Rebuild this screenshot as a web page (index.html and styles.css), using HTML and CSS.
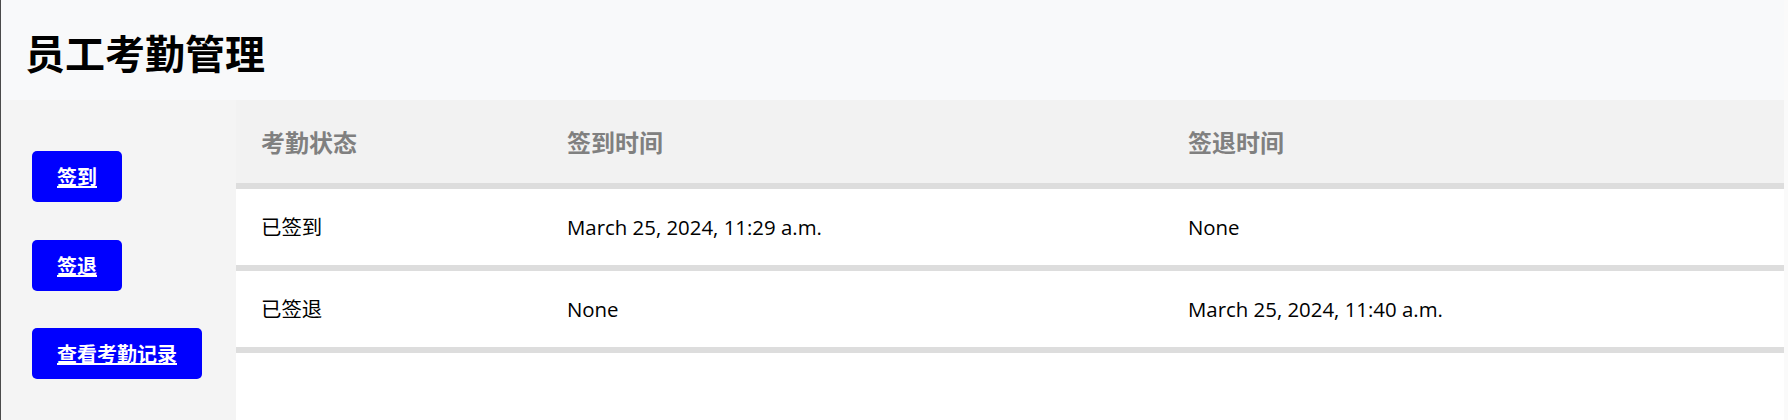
FILE: index.html
```html
<!DOCTYPE html>
<html lang="zh-CN">
<head>
<meta charset="utf-8">
<title>员工考勤管理</title>
<link rel="stylesheet" href="styles.css">
</head>
<body>
<div class="page">
  <header class="topbar">
    <h1 class="title">员工考勤管理</h1>
  </header>
  <div class="main">
    <nav class="sidebar">
      <a class="btn" href="#">签到</a>
      <a class="btn" href="#">签退</a>
      <a class="btn" href="#">查看考勤记录</a>
    </nav>
    <section class="content">
      <table class="records">
        <colgroup>
          <col class="col-status">
          <col class="col-in">
          <col>
        </colgroup>
        <thead>
          <tr>
            <th>考勤状态</th>
            <th>签到时间</th>
            <th>签退时间</th>
          </tr>
        </thead>
        <tbody>
          <tr>
            <td>已签到</td>
            <td>March 25, 2024, 11:29 a.m.</td>
            <td>None</td>
          </tr>
          <tr>
            <td>已签退</td>
            <td>None</td>
            <td>March 25, 2024, 11:40 a.m.</td>
          </tr>
        </tbody>
      </table>
    </section>
  </div>
</div>
</body>
</html>
```
FILE: styles.css
```css
html {
  background: #fafafa;
}
body {
  margin: 0;
  font-family: "Open Sans", "Noto Sans CJK SC", sans-serif;
  color: #000;
}
.page {
  margin-right: 4px;
  border-left: 1px solid #4a4a4a;
  min-height: 100vh;
  display: flex;
  flex-direction: column;
  background: #fff;
}
.topbar {
  background: #f8f9fa;
  height: 100px;
  box-sizing: border-box;
  padding: 32px 0 0 24px;
}
.title {
  margin: 0;
  font-size: 40px;
  line-height: 40px;
  font-weight: 700;
  font-family: "Noto Sans CJK SC", sans-serif;
}
.main {
  flex: 1;
  display: flex;
}
.sidebar {
  width: 235px;
  flex: none;
  background: #f4f4f4;
  box-sizing: border-box;
  padding: 51px 0 0 31px;
  display: flex;
  flex-direction: column;
  align-items: flex-start;
  gap: 37.5px;
}
.btn {
  display: inline-block;
  background: #0000ff;
  color: #fff;
  font-family: "Noto Sans CJK SC", sans-serif;
  font-weight: 700;
  font-size: 20px;
  line-height: 27px;
  padding: 12px 25px;
  border-radius: 5px;
  text-decoration: underline;
}
.content {
  flex: 1;
  background: #fff;
}
.records {
  width: 100%;
  border-collapse: collapse;
  table-layout: fixed;
}
.col-status {
  width: 306px;
}
.col-in {
  width: 621px;
}
.records th {
  text-align: left;
  background: #f2f2f2;
  color: #808080;
  font-family: "Noto Sans CJK SC", sans-serif;
  font-weight: 700;
  font-size: 24px;
  line-height: 33px;
  padding: 25px;
  border-bottom: 6px solid #dddddd;
}
.records td {
  font-size: 20.4px;
  line-height: 26px;
  padding: 25px;
  border-bottom: 6px solid #dddddd;
}
```
